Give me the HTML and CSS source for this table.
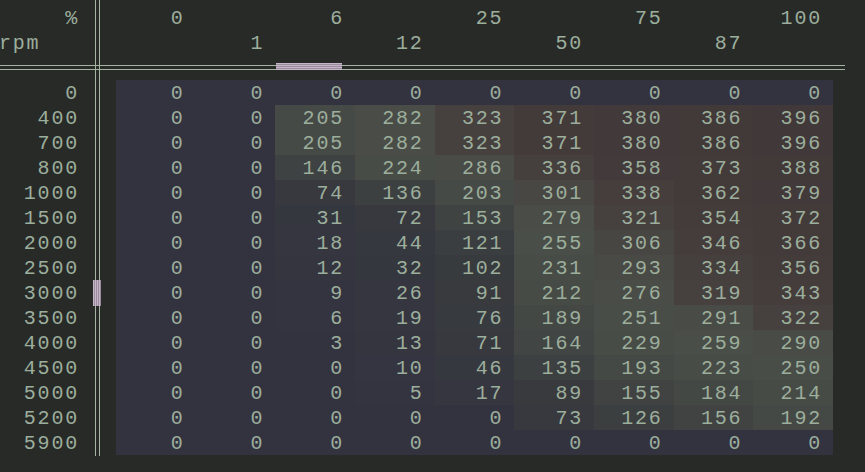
FILE: index.html
```html
<!DOCTYPE html>
<html>
<head>
<meta charset="utf-8">
<link rel="stylesheet" href="styles.css">
</head>
<body>
<div class="app">
  <div class="corner">
    <div class="corner-top">%</div>
    <div class="corner-bot">rpm</div>
  </div>
  <div class="vline"><div class="vthumb"></div></div>
  <div class="colhead">
    <div class="hrow"><span>0</span><span></span><span>6</span><span></span><span>25</span><span></span><span>75</span><span></span><span>100</span></div>
    <div class="hrow"><span></span><span>1</span><span></span><span>12</span><span></span><span>50</span><span></span><span>87</span><span></span></div>
  </div>
  <div class="hline"><div class="hthumb"></div></div>
  <div class="rowhead">
    <span>0</span><span>400</span><span>700</span><span>800</span><span>1000</span><span>1500</span><span>2000</span><span>2500</span><span>3000</span><span>3500</span><span>4000</span><span>4500</span><span>5000</span><span>5200</span><span>5900</span>
  </div>
  <div class="body">
    <div class="grid" id="grid">
      <span>0</span><span>0</span><span>0</span><span>0</span><span>0</span><span>0</span><span>0</span><span>0</span><span>0</span>
      <span>0</span><span>0</span><span>205</span><span>282</span><span>323</span><span>371</span><span>380</span><span>386</span><span>396</span>
      <span>0</span><span>0</span><span>205</span><span>282</span><span>323</span><span>371</span><span>380</span><span>386</span><span>396</span>
      <span>0</span><span>0</span><span>146</span><span>224</span><span>286</span><span>336</span><span>358</span><span>373</span><span>388</span>
      <span>0</span><span>0</span><span>74</span><span>136</span><span>203</span><span>301</span><span>338</span><span>362</span><span>379</span>
      <span>0</span><span>0</span><span>31</span><span>72</span><span>153</span><span>279</span><span>321</span><span>354</span><span>372</span>
      <span>0</span><span>0</span><span>18</span><span>44</span><span>121</span><span>255</span><span>306</span><span>346</span><span>366</span>
      <span>0</span><span>0</span><span>12</span><span>32</span><span>102</span><span>231</span><span>293</span><span>334</span><span>356</span>
      <span>0</span><span>0</span><span>9</span><span>26</span><span>91</span><span>212</span><span>276</span><span>319</span><span>343</span>
      <span>0</span><span>0</span><span>6</span><span>19</span><span>76</span><span>189</span><span>251</span><span>291</span><span>322</span>
      <span>0</span><span>0</span><span>3</span><span>13</span><span>71</span><span>164</span><span>229</span><span>259</span><span>290</span>
      <span>0</span><span>0</span><span>0</span><span>10</span><span>46</span><span>135</span><span>193</span><span>223</span><span>250</span>
      <span>0</span><span>0</span><span>0</span><span>5</span><span>17</span><span>89</span><span>155</span><span>184</span><span>214</span>
      <span>0</span><span>0</span><span>0</span><span>0</span><span>0</span><span>73</span><span>126</span><span>156</span><span>192</span>
      <span>0</span><span>0</span><span>0</span><span>0</span><span>0</span><span>0</span><span>0</span><span>0</span><span>0</span>
    </div>
  </div>
</div>
<script src="script.js"></script>
</body>
</html>
```
FILE: styles.css
```css
html, body {
  margin: 0;
  padding: 0;
  background: #282a28;
}
body {
  width: 865px;
  height: 472px;
  overflow: hidden;
  font-family: "Liberation Mono", "Courier New", monospace;
  font-size: 20px;
  letter-spacing: 1.8px;
  color: #9cae9c;
}
.app {
  display: grid;
  grid-template-columns: 95px 5px 745px;
  grid-template-rows: 65px 5px 386px;
}
.corner {
  grid-column: 1;
  grid-row: 1;
  padding-top: 5px;
}
.corner div {
  height: 25px;
  box-sizing: border-box;
  padding-top: 3px;
  line-height: 21px;
}
.corner-top {
  text-align: right;
  padding-right: 16px;
}
.corner-bot {
  margin-left: -1px;
}
.vline {
  grid-column: 2;
  grid-row: 1 / 4;
  border-left: 1px solid #a3b4a3;
  border-right: 1px solid #a3b4a3;
  position: relative;
  z-index: 2;
}
.hline {
  grid-column: 1 / 4;
  grid-row: 2;
  border-top: 1px solid #a3b4a3;
  border-bottom: 1px solid #a3b4a3;
  position: relative;
  z-index: 1;
}
.hthumb {
  position: absolute;
  left: 276px;
  top: -3px;
  width: 66px;
  height: 7px;
  background: repeating-linear-gradient(to bottom, #c4b6c6 0 1px, #9a8c9c 1px 2px);
}
.vthumb {
  position: absolute;
  left: -3px;
  top: 280px;
  width: 8px;
  height: 26px;
  background: repeating-linear-gradient(to right, #c4b6c6 0 1px, #9a8c9c 1px 2px);
}
.colhead {
  grid-column: 3;
  grid-row: 1;
  padding: 5px 0 0 16px;
}
.hrow {
  display: grid;
  grid-template-columns: repeat(9, 1fr);
  width: 717px;
}
.hrow span {
  height: 25px;
  box-sizing: border-box;
  padding-top: 3px;
  line-height: 21px;
  text-align: right;
  padding-right: 11px;
}
.rowhead {
  grid-column: 1;
  grid-row: 3;
  padding-top: 10px;
  display: flex;
  flex-direction: column;
}
.rowhead span {
  height: 25px;
  box-sizing: border-box;
  padding-top: 3px;
  line-height: 21px;
  text-align: right;
  padding-right: 16px;
}
.body {
  grid-column: 3;
  grid-row: 3;
  padding: 10px 0 0 16px;
}
.grid {
  display: grid;
  grid-template-columns: repeat(9, 1fr);
  grid-auto-rows: 25px;
  width: 717px;
  background: #333340;
}
.grid span {
  box-sizing: border-box;
  padding-top: 3px;
  line-height: 21px;
  text-align: right;
  padding-right: 11px;
}
```
FILE: script.js
```js
(function () {
  var stops = [
    [0, [51, 51, 64]],
    [20, [53, 54, 63]],
    [100, [56, 59, 62]],
    [200, [70, 74, 70]],
    [260, [74, 78, 72]],
    [290, [73, 75, 70]],
    [320, [70, 65, 63]],
    [365, [67, 58, 58]],
    [400, [65, 56, 57]]
  ];
  function color(v) {
    if (v <= 0) return null;
    for (var i = 1; i < stops.length; i++) {
      if (v <= stops[i][0]) {
        var a = stops[i - 1], b = stops[i];
        var t = (v - a[0]) / (b[0] - a[0]);
        var c = a[1].map(function (x, k) { return Math.round(x + (b[1][k] - x) * t); });
        return 'rgb(' + c.join(',') + ')';
      }
    }
    var l = stops[stops.length - 1][1];
    return 'rgb(' + l.join(',') + ')';
  }
  var cells = document.querySelectorAll('#grid span');
  for (var i = 0; i < cells.length; i++) {
    var c = color(parseInt(cells[i].textContent, 10));
    if (c) cells[i].style.background = c;
  }
})();
```
